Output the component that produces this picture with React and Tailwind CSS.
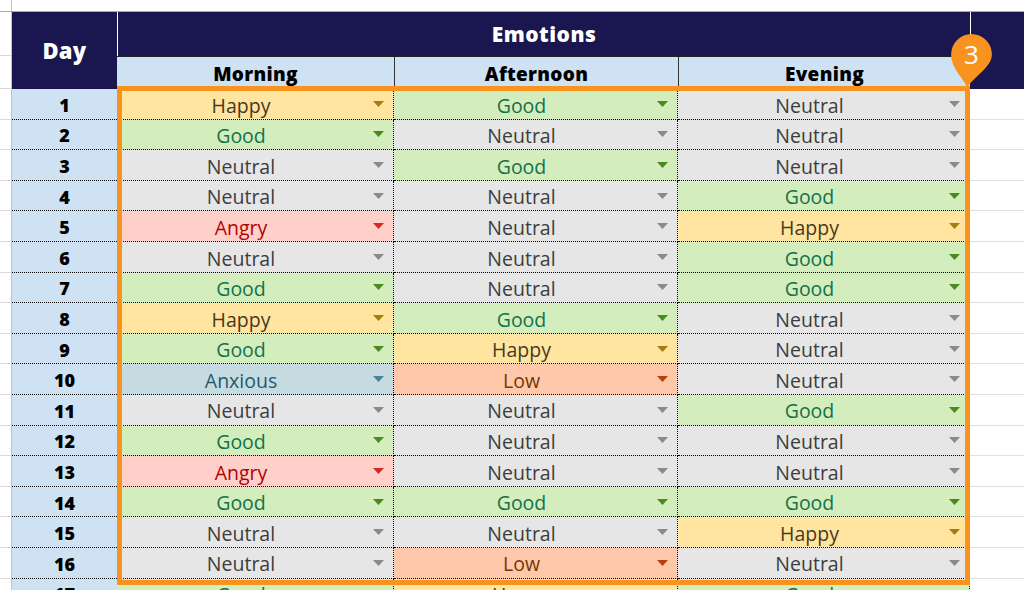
import React from "react";

const STY = {
  Happy: { bg: "bg-[#ffe5a0]", text: "text-[#473821]", arrow: "#a57c10" },
  Good: { bg: "bg-[#d4edbc]", text: "text-[#11734b]", arrow: "#4b8a1c" },
  Neutral: { bg: "bg-[#e6e6e6]", text: "text-[#3d3d3d]", arrow: "#8a8a8a" },
  Angry: { bg: "bg-[#ffcfc9]", text: "text-[#b10202]", arrow: "#d42a22" },
  Anxious: { bg: "bg-[#c6dbe1]", text: "text-[#215a6c]", arrow: "#4a8299" },
  Low: { bg: "bg-[#ffc8aa]", text: "text-[#753800]", arrow: "#b5420c" },
};

const ROWS = [
  ["Happy", "Good", "Neutral"],
  ["Good", "Neutral", "Neutral"],
  ["Neutral", "Good", "Neutral"],
  ["Neutral", "Neutral", "Good"],
  ["Angry", "Neutral", "Happy"],
  ["Neutral", "Neutral", "Good"],
  ["Good", "Neutral", "Good"],
  ["Happy", "Good", "Neutral"],
  ["Good", "Happy", "Neutral"],
  ["Anxious", "Low", "Neutral"],
  ["Neutral", "Neutral", "Good"],
  ["Good", "Neutral", "Neutral"],
  ["Angry", "Neutral", "Neutral"],
  ["Good", "Good", "Good"],
  ["Neutral", "Neutral", "Happy"],
  ["Neutral", "Low", "Neutral"],
  ["Good", "Happy", "Good"],
];

const WIDTHS = ["w-[277px]", "w-[284px]", "w-[292px]"];

function Cell({ value, width }) {
  const s = STY[value];
  return (
    <div
      className={`${width} shrink-0 ${s.bg} border-r border-b border-dotted border-black flex items-center pr-[9px]`}
    >
      <span className={`flex-1 text-center text-[19.5px] leading-none pt-[3px] ${s.text}`}>
        {value}
      </span>
      <svg width="11" height="6" viewBox="0 0 11 6" className="ml-[8px] shrink-0">
        <path d="M0 0 L11 0 L5.5 6 Z" fill={s.arrow} />
      </svg>
    </div>
  );
}

export default function App() {
  return (
    <div
      className="relative w-[1024px] h-[590px] overflow-hidden bg-white"
      style={{ fontFamily: '"Open Sans", "Liberation Sans", sans-serif' }}
    >
      {/* top strip */}
      <div className="flex h-[12px] border-b border-[#a8a8a8]">
        <div className="w-[12px] shrink-0 border-r border-[#c4c4c4]" />
        <div className="flex-1" />
      </div>

      {/* header */}
      <div className="flex h-[77px]">
        <div className="w-[12px] shrink-0 flex flex-col border-r border-[#c4c4c4]">
          <div className="h-[44px] border-b border-[#d8d8d8]" />
          <div className="flex-1 border-b border-[#d8d8d8]" />
        </div>
        <div className="w-[105px] shrink-0 bg-[#1a1650] flex items-center justify-center text-white font-extrabold text-[22px] tracking-[0.3px]">
          Day
        </div>
        <div className="w-[853px] shrink-0 flex flex-col">
          <div className="h-[44px] bg-[#1a1650] border-l border-white flex items-center justify-center pt-[2px] text-white font-extrabold text-[21px] tracking-[0.5px]">
            Emotions
          </div>
          <div className="flex-1 flex bg-[#cfe2f3] border-t border-[#222]">
            <div className="w-[277px] shrink-0 flex items-center justify-center pt-[2px] font-extrabold text-[19px] text-black tracking-[0.3px]">
              Morning
            </div>
            <div className="w-[284px] shrink-0 border-l border-[#333] flex items-center justify-center pt-[2px] font-extrabold text-[19px] text-black tracking-[0.3px]">
              Afternoon
            </div>
            <div className="flex-1 border-l border-[#333] flex items-center justify-center pt-[2px] font-extrabold text-[19px] text-black tracking-[0.3px]">
              Evening
            </div>
          </div>
        </div>
        <div className="flex-1 flex flex-col bg-[#1a1650]">
          <div className="h-[44px] border-l border-white" />
          <div className="flex-1" />
        </div>
      </div>

      {/* rows */}
      {ROWS.map((r, i) => (
        <div key={i} className="flex h-[30.6px]">
          <div className="w-[12px] shrink-0 border-r border-b border-r-[#c4c4c4] border-b-[#dcdcdc]" />
          <div className="w-[105px] shrink-0 bg-[#cfe2f3] border-b border-dotted border-black flex items-center justify-center pt-[2px] font-extrabold text-[18px] text-black leading-none">
            {i + 1}
          </div>
          {r.map((v, j) => (
            <Cell key={j} value={v} width={WIDTHS[j]} />
          ))}
          <div className="flex-1 border-b border-[#e0e0e0]" />
        </div>
      ))}

      {/* selection overlay */}
      <div className="absolute left-[117px] top-[86px] w-[853px] h-[499px] border-[5px] border-[#f7931e] pointer-events-none" />

      {/* pin marker */}
      <div className="absolute left-[951px] top-[34px] w-[41px] h-[54px]">
        <svg width="41" height="54" viewBox="0 0 40 53" className="absolute inset-0">
          <path
            d="M16 53 C 13 44, 0 34, 0 20 A 20 20 0 0 1 40 20 C 40 33, 20 43, 16 53 Z"
            fill="#f7931e"
          />
        </svg>
        <div className="absolute left-0 top-0 w-[41px] h-[40px] flex items-center justify-center text-white text-[26px] leading-none">
          3
        </div>
      </div>
    </div>
  );
}
